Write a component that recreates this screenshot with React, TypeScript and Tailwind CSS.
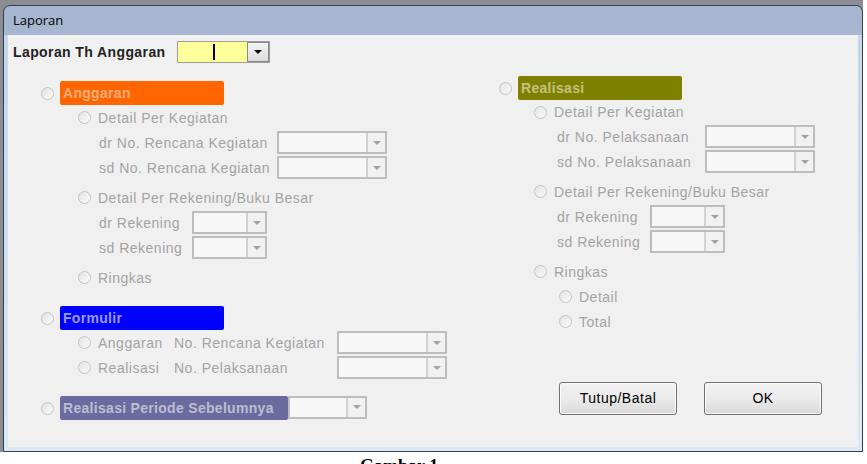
import React from 'react'

const txt = 'text-[14px] tracking-[0.5px] text-[#a3a3a3] whitespace-nowrap leading-none'

function Radio() {
  return <span className="w-[13px] h-[13px] shrink-0 rounded-full border border-[#c4c4c4] bg-gradient-to-br from-[#e2e2e2] to-[#fbfbfb]" />
}

function Combo({ w }: { w: string }) {
  return (
    <div className={`${w} h-[23px] flex border-2 border-[#bdbdbd] bg-[#f7f7f7]`}>
      <div className="ml-auto w-[19px] border-l-2 border-[#d2d2d2] bg-[#f1f1f1] flex items-center justify-center">
        <span className="border-x-[4px] border-x-transparent border-t-[4px] border-t-[#a2a2a2]" />
      </div>
    </div>
  )
}

function Opt({ label, ml = 'ml-[37px]' }: { label: string; ml?: string }) {
  return (
    <div className={`h-[25px] flex items-center ${ml}`}>
      <Radio />
      <span className={`ml-[7px] ${txt}`}>{label}</span>
    </div>
  )
}

function Field({ label, lw, cw }: { label: string; lw: string; cw: string }) {
  return (
    <div className="h-[25px] flex items-center ml-[58px]">
      <span className={`${lw} ${txt}`}>{label}</span>
      <Combo w={cw} />
    </div>
  )
}

function Group({ label, bg, fg, w }: { label: string; bg: string; fg: string; w: string }) {
  return (
    <div className="flex items-center">
      <Radio />
      <div className={`ml-[6px] ${w} h-[24px] rounded-[2px] ${bg} ${fg} flex items-center pl-[3px] text-[14px] font-bold tracking-[0.3px] whitespace-nowrap`}>
        {label}
      </div>
    </div>
  )
}

function Btn({ label }: { label: string }) {
  return (
    <button className="w-[118px] h-[33px] rounded-[3px] border border-[#707070] bg-gradient-to-b from-[#f2f2f2] via-[#ebebeb] to-[#d9d9d9] text-[14px] tracking-[0.5px] text-black shadow-[inset_0_0_0_1px_#fcfcfc]">
      {label}
    </button>
  )
}

export default function App() {
  return (
    <div className="w-[867px] h-[464px] overflow-hidden bg-white font-['Liberation_Sans',Arial,sans-serif]">
      <div className="w-[863px] bg-[#8b8d92] pl-[3px] pt-[5px]">
        <div className="w-[860px] h-[447px] flex flex-col rounded-t-[7px] border border-[#34404f] bg-gradient-to-b from-[#a5b5cf] to-[#c6d6ea] overflow-hidden">
          <div className="h-[29px] shrink-0 flex items-center pl-[9px] font-['Open_Sans',sans-serif] text-[13px] text-black">Laporan</div>
          <div className="flex-1 flex flex-col px-[4px] pb-[4px] bg-gradient-to-b from-[#c6d6ea] to-[#dbe8f5]">
            <div className="flex-1 bg-[#f0f0f0]">
              {/* header */}
              <div className="mt-[6px] h-[22px] flex items-center pl-[5px]">
                <span className="w-[164px] text-[14px] font-bold tracking-[0.4px] text-[#222] whitespace-nowrap">Laporan Th Anggaran</span>
                <div className="w-[93px] h-[22px] flex border border-[#9c9c9c] bg-[#ffff99]">
                  <div className="ml-[35px] mt-[2px] w-[2px] h-[16px] bg-black" />
                  <div className="ml-auto w-[22px] border border-[#8a8a8a] bg-gradient-to-b from-[#f4f4f4] to-[#dcdcdc] flex items-center justify-center">
                    <span className="border-x-[4px] border-x-transparent border-t-[4px] border-t-black" />
                  </div>
                </div>
              </div>

              <div className="flex">
                {/* left column */}
                <div className="ml-[33px] w-[458px] flex flex-col">
                  <div className="mt-[18px]">
                    <Group label="Anggaran" bg="bg-[#ff6600]" fg="text-[#ffab78]" w="w-[164px]" />
                  </div>
                  <Opt label="Detail Per Kegiatan" />
                  <Field label="dr No. Rencana Kegiatan" lw="w-[178px]" cw="w-[110px]" />
                  <Field label="sd No. Rencana Kegiatan" lw="w-[178px]" cw="w-[110px]" />
                  <div className="mt-[5px]"><Opt label="Detail Per Rekening/Buku Besar" /></div>
                  <Field label="dr Rekening" lw="w-[93px]" cw="w-[75px]" />
                  <Field label="sd Rekening" lw="w-[93px]" cw="w-[75px]" />
                  <div className="mt-[5px]"><Opt label="Ringkas" /></div>
                  <div className="mt-[16px]">
                    <Group label="Formulir" bg="bg-[#0000ff]" fg="text-[#9a9aff]" w="w-[164px]" />
                  </div>
                  <div className="h-[25px] flex items-center ml-[37px]">
                    <Radio />
                    <span className={`ml-[7px] w-[76px] ${txt}`}>Anggaran</span>
                    <span className={`w-[163px] ${txt}`}>No. Rencana Kegiatan</span>
                    <Combo w="w-[110px]" />
                  </div>
                  <div className="h-[25px] flex items-center ml-[37px]">
                    <Radio />
                    <span className={`ml-[7px] w-[76px] ${txt}`}>Realisasi</span>
                    <span className={`w-[163px] ${txt}`}>No. Pelaksanaan</span>
                    <Combo w="w-[110px]" />
                  </div>
                  <div className="mt-[16px] flex items-center">
                    <Group label="Realisasi Periode Sebelumnya" bg="bg-[#6b6b9f]" fg="text-[#bdbdd3]" w="w-[228px]" />
                    <div className="-mt-[2px]"><Combo w="w-[79px]" /></div>
                  </div>
                </div>

                {/* right column */}
                <div className="flex-1 flex flex-col">
                  <div className="mt-[13px]">
                    <Group label="Realisasi" bg="bg-[#808000]" fg="text-[#c2c27e]" w="w-[164px]" />
                  </div>
                  <div className="h-[24px] flex items-center ml-[35px]">
                    <Radio />
                    <span className={`ml-[7px] ${txt}`}>Detail Per Kegiatan</span>
                  </div>
                  <Field label="dr No. Pelaksanaan" lw="w-[148px]" cw="w-[110px]" />
                  <Field label="sd No. Pelaksanaan" lw="w-[148px]" cw="w-[110px]" />
                  <div className="mt-[5px]"><Opt label="Detail Per Rekening/Buku Besar" ml="ml-[35px]" /></div>
                  <Field label="dr Rekening" lw="w-[93px]" cw="w-[75px]" />
                  <Field label="sd Rekening" lw="w-[93px]" cw="w-[75px]" />
                  <div className="mt-[5px]"><Opt label="Ringkas" ml="ml-[35px]" /></div>
                  <Opt label="Detail" ml="ml-[60px]" />
                  <Opt label="Total" ml="ml-[60px]" />
                  <div className="mt-[48px] flex ml-[60px] gap-[27px]">
                    <Btn label="Tutup/Batal" />
                    <Btn label="OK" />
                  </div>
                </div>
              </div>
            </div>
          </div>
        </div>
      </div>
      <div className="pl-[360px] pt-[4px] font-['Liberation_Serif',serif] font-bold text-[18px] leading-[20px] text-black">Gambar 1</div>
    </div>
  )
}
